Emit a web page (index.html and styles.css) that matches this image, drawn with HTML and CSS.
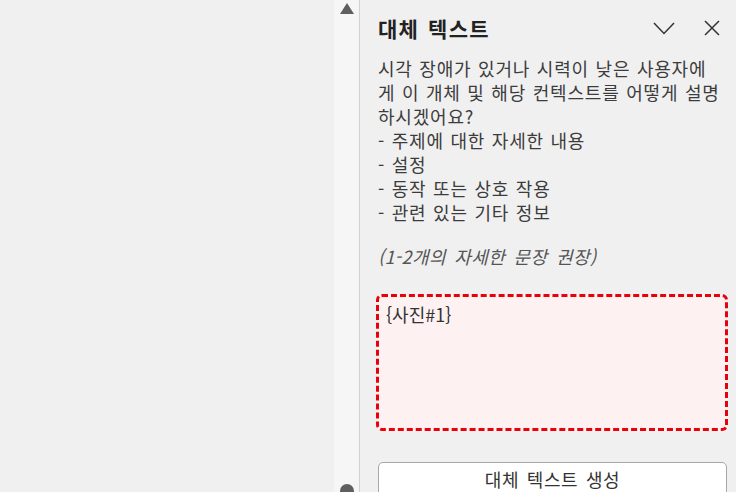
FILE: index.html
```html
<!DOCTYPE html>
<html lang="ko">
<head>
<meta charset="utf-8">
<link rel="stylesheet" href="styles.css">
</head>
<body>
<div class="app">
  <div class="canvas"></div>
  <div class="scrollbar">
    <svg class="arrow" width="14" height="11" viewBox="0 0 14 11"><polygon points="7,0 14,11 0,11" fill="#5f5f5f"/></svg>
    <div class="thumb"></div>
  </div>
  <div class="panel">
    <div class="header">
      <h1 class="title">대체 텍스트</h1>
      <div class="icons">
        <svg class="icon" width="22" height="13" viewBox="0 0 22 13"><polyline points="1,1 11,11.5 21,1" fill="none" stroke="#333" stroke-width="1.5"/></svg>
        <svg class="icon" width="16" height="16" viewBox="0 0 16 16"><path d="M1 1 L15 15 M15 1 L1 15" fill="none" stroke="#333" stroke-width="1.5"/></svg>
      </div>
    </div>
    <p class="desc">시각 장애가 있거나 시력이 낮은 사용자에<br>게 이 개체 및 해당 컨텍스트를 어떻게 설명<br>하시겠어요?<br>- 주제에 대한 자세한 내용<br>- 설정<br>- 동작 또는 상호 작용<br>- 관련 있는 기타 정보</p>
    <p class="hint">(1-2개의 자세한 문장 권장)</p>
    <div class="field">{사진#1}</div>
    <button class="btn">대체 텍스트 생성</button>
  </div>
</div>
</body>
</html>
```
FILE: styles.css
```css
html, body {
  margin: 0;
  padding: 0;
  background: #f0f0f0;
}
body {
  font-family: "Noto Sans CJK KR", "Noto Sans", sans-serif;
  color: #3c3c3c;
}
.app {
  display: flex;
  width: 736px;
  height: 492px;
  overflow: hidden;
}
.canvas {
  width: 334px;
  flex: none;
  background: #f0f0f0;
}
.scrollbar {
  width: 25px;
  flex: none;
  background: #f6f6f6;
  border-right: 1px solid #d2d2d2;
  display: flex;
  flex-direction: column;
  align-items: center;
  justify-content: space-between;
}
.arrow {
  margin-top: 3px;
}
.thumb {
  width: 14px;
  height: 8px;
  background: #5f5f5f;
  border-radius: 7px 7px 0 0;
}
.panel {
  flex: 1;
  padding: 12px 8px 0 18px;
  display: flex;
  flex-direction: column;
  min-width: 0;
}
.panel > * {
  flex: none;
}
.header {
  display: flex;
  align-items: center;
  justify-content: space-between;
  height: 32px;
}
.title {
  margin: 0;
  font-size: 21px;
  font-weight: 700;
  color: #222;
  line-height: 32px;
  letter-spacing: 1.2px;
  word-spacing: 2px;
}
.icons {
  display: flex;
  align-items: center;
  gap: 29px;
  margin-right: 8px;
}
.desc {
  margin: 12px 0 0;
  font-size: 18px;
  line-height: 24px;
  white-space: nowrap;
  letter-spacing: 0.8px;
  word-spacing: 0.8px;
}
.hint {
  margin: 20px 0 0;
  font-size: 18px;
  line-height: 24px;
  font-style: italic;
  color: #555;
  letter-spacing: 0.4px;
  word-spacing: 3px;
}
.field {
  margin: 26px 0 0 -2px;
  height: 137px;
  box-sizing: border-box;
  border: 3px dashed #e8000b;
  border-radius: 6px;
  background: #fdf1f1;
  padding: 5px 7px;
  font-size: 18px;
  line-height: 24px;
  color: #333;
}
.btn {
  margin: 31px 1px 0 0;
  height: 34px;
  border: 1px solid #a8a8a8;
  border-radius: 5px;
  background: #fff;
  font-family: inherit;
  font-size: 18px;
  color: #333;
  letter-spacing: 0.6px;
  word-spacing: 2px;
}
```
